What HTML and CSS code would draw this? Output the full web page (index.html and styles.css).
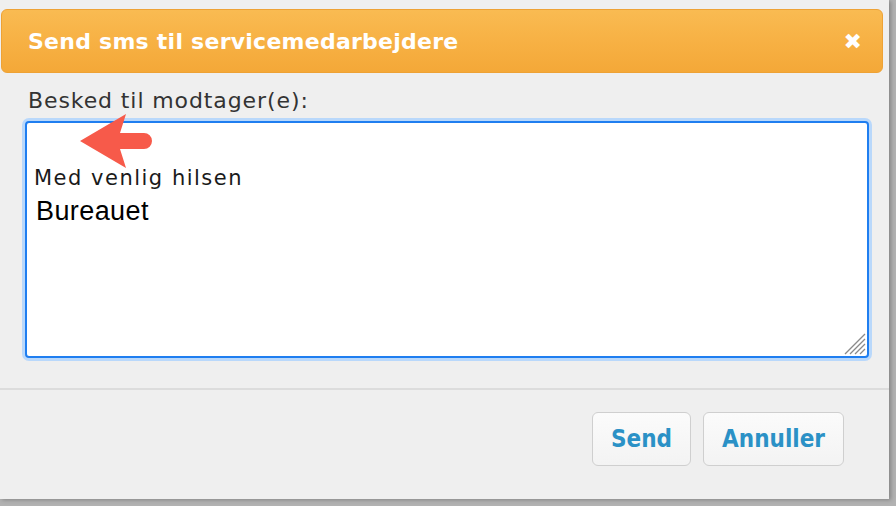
FILE: index.html
```html
<!DOCTYPE html>
<html lang="da">
<head>
  <meta charset="UTF-8" />
  <title>Send sms til servicemedarbejdere</title>
  <link rel="stylesheet" href="styles.css">
</head>
<body>

  <div class="dialog">
    <header class="titlebar">
      <h1>Send sms til servicemedarbejdere</h1>
      <span class="close">&#x2716;</span>
    </header>

    <section class="content">
      <label for="msg">Besked til modtager(e):</label>
      <div class="field">
        <div class="textarea" id="msg">
          <p class="empty">&nbsp;</p>
          <p class="greet">Med venlig hilsen</p>
          <p class="sign">Bureauet</p>
        </div>
        <svg class="grip" width="22" height="22" viewBox="0 0 22 22">
          <path d="M21 6 L6 21 M21 11 L11 21 M21 16 L16 21 M21 1 L1 21" stroke="#8a8a8a" stroke-width="1.3"/>
        </svg>
        <svg class="arrow" width="76" height="54" viewBox="0 0 76 54">
          <path d="M0 27 L46 0 L40 19 L64 19 A8 8 0 0 1 64 35 L40 35 L46 54 Z" fill="#f75a4a"/>
        </svg>
      </div>
    </section>

    <footer class="buttons">
      <button>Send</button>
      <button>Annuller</button>
    </footer>
  </div>

</body>
</html>
```

FILE: styles.css
```css
* {
  box-sizing: border-box;
  margin: 0;
  padding: 0;
}

body {
  background-color: #b2b2b2;
  font-family: "DejaVu Sans", Verdana, sans-serif;
  width: 896px;
  height: 506px;
  overflow: hidden;
}

.dialog {
  width: 889px;
  height: 499px;
  background: #efefef;
  box-shadow: 2px 1px 4px rgba(0, 0, 0, 0.25);
  padding-top: 9px;
}

.titlebar {
  margin: 0 6px 0 1px;
  height: 64px;
  border: 1px solid #eea235;
  border-radius: 6px;
  background: linear-gradient(#f9bb52, #f7b144 50%, #f4a838);
  display: flex;
  align-items: center;
  justify-content: space-between;
  padding: 0 20px 0 26px;
}

.titlebar h1 {
  color: #fff;
  font-size: 22px;
  font-weight: bold;
  letter-spacing: 0.25px;
}

.close {
  color: #fff;
  font-size: 22px;
  font-weight: bold;
}

.content {
  padding: 14px 20px 0 25px;
}

.content label {
  display: block;
  color: #333;
  font-size: 22px;
  letter-spacing: 0.9px;
  line-height: 28px;
  padding-left: 3px;
  margin-bottom: 6px;
}

.field {
  position: relative;
}

.textarea {
  height: 237px;
  background: #fff;
  border: 2px solid #1f7ef0;
  border-radius: 4px;
  box-shadow: 0 0 0 3px #b9d8fb;
  padding: 6px 7px;
}

.textarea p {
  line-height: 33px;
}

.greet {
  font-size: 21px;
  letter-spacing: 1.5px;
  color: #1a1a1a;
}

.sign {
  font-family: "Liberation Sans", Arial, sans-serif;
  font-size: 27px;
  letter-spacing: 0.4px;
  color: #000;
  padding-left: 2px;
}

.grip {
  position: absolute;
  right: 3px;
  bottom: 3px;
}

.arrow {
  position: absolute;
  left: 55px;
  top: -7px;
}

.buttons {
  margin-top: 30px;
  border-top: 2px solid #dcdcdc;
  display: flex;
  justify-content: flex-end;
  gap: 12px;
  padding: 22px 45px 0 0;
}

.buttons button {
  font-family: "DejaVu Sans Condensed", "DejaVu Sans", sans-serif;
  font-size: 24px;
  font-weight: bold;
  color: #2b91c6;
  background: linear-gradient(#fbfbfb, #f3f3f3);
  border: 1px solid #cfcfcf;
  border-radius: 6px;
  height: 54px;
  padding: 0 18px;
  cursor: pointer;
}
```
